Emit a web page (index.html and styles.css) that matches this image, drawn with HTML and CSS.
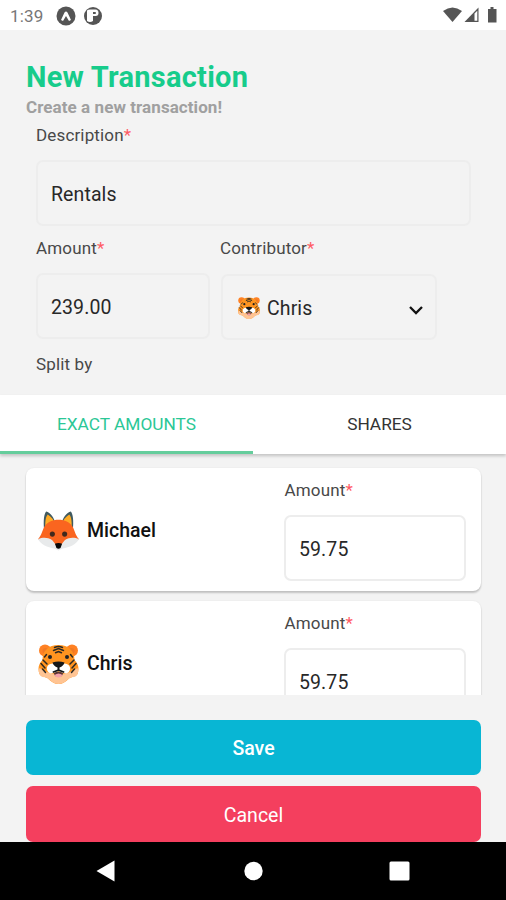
FILE: index.html
```html
<!DOCTYPE html>
<html lang="en">
<head>
<meta charset="utf-8">
<title>New Transaction</title>
<link rel="stylesheet" href="styles.css">
</head>
<body>
<svg class="defs" aria-hidden="true">
  <symbol id="tiger" viewBox="0 0 40 40">
    <circle cx="6.500" cy="6.500" r="6" fill="#ff8124"/><circle cx="33.500" cy="6.500" r="6" fill="#ff8124"/>
    <circle cx="7" cy="7" r="3" fill="#f07a25"/><circle cx="33" cy="7" r="3" fill="#f07a25"/>
    <path d="M20 1C10 1 4 7 4 16C0 20-1 25 1 30C3 33 7 33 9 34C13 38 16 40 20 40S27 38 31 34C33 33 37 33 39 30C41 25 40 20 36 16C36 7 30 1 20 1Z" fill="#ff9420"/>
    <path d="M1 24C-1 29 2 34 7 33C11 35 14 40 20 40S29 35 33 33C38 34 41 29 39 24L32 28L20 31L8 28Z" fill="#ffc493"/>
    <path d="M18 20C10 18 7 23 9 27C11 31 17 29 20 27C23 29 29 31 31 27C33 23 30 18 22 20Z" fill="#fff"/>
    <path d="M15.500 29Q20 26.500 24.500 29Q24 33 20 33T15.500 29Z" fill="#5b3333"/><path d="M16 31Q20 28 24 31Q23 33.500 20 33.500T16 31Z" fill="#f5a0a8"/>
    <path d="M14 18.500Q20 16.500 26 18.500Q25 22 21 23.500V25.500L26 27.500L25.500 29L20 27L14.500 29L14 27.500L19 25.500V23.500Q15 22 14 18.500Z" fill="#151719"/>
    <circle cx="11.500" cy="13" r="2" fill="#202225"/><circle cx="28.500" cy="13" r="2" fill="#202225"/>
    <g fill="none" stroke="#2b2925" stroke-width="1.500" stroke-linecap="round"><path d="M16 3.500Q20 1.500 24 3.500M15 6.500L20 4.500L25 6.500M17 8.800L20 7.500L23 8.800M6 13L8 10.500M34 13L32 10.500M4.500 16L8.500 20M35.500 16L31.500 20M2.500 19.500L6.500 24M37.500 19.500L33.500 24M4 25L7 28.500M36 25L33 28.500"/></g>
  </symbol>
  <symbol id="fox" viewBox="0 0 40 38">
    <path d="M6 18C5 9 6 2 8 0C12 1 16 6 17 12L23 12C24 6 28 1 32 0C34 2 35 9 34 18Z" fill="#405a60"/>
    <path d="M7.500 18C6.500 11 7.500 5 9.500 3C13 5 16 9 17 13ZM32.500 18C33.500 11 32.500 5 30.500 3C27 5 24 9 23 13Z" fill="#ffab24"/>
    <path d="M20 8C14 8 9 10 6 15C4 19 4 22 0 27L13 34L20 37L27 34L40 27C36 22 36 19 34 15C31 10 26 8 20 8Z" fill="#fa651f"/>
    <path d="M0 27C5 25 9 25 14 28L20 32L26 28C31 25 35 25 40 27C37 32 31 35 24 36L20 38L16 36C9 35 3 32 0 27Z" fill="#e8eaeb"/>
    <path d="M14 28L20 26L26 28L23 32H17Z" fill="#fa651f"/>
    <path d="M16.500 31.500Q20 30 23.500 31.500L22 35.500Q20 37 18 35.500Z" fill="#080808"/>
    <circle cx="14" cy="22" r="2.500" fill="#42291d"/><circle cx="26" cy="22" r="2.500" fill="#42291d"/>
  </symbol>
</svg>
<div class="screen">
  <header class="status">
    <span class="clock">1:39</span>
    <svg class="app-icon" viewBox="0 0 20 20"><circle cx="10" cy="10" r="9.500" fill="#555"/><path d="M5 14L8.500 6.500Q10 4.500 11.500 6.500L15 14L13 15L10 10L7 15Z" fill="#fff"/></svg>
    <svg class="app-icon second" viewBox="0 0 20 20"><circle cx="10" cy="10" r="9" fill="#555"/><path d="M4 4.500Q5 3.500 7 3.500H12.500Q15.500 3.500 15.500 7T12 10H10V15Q7 17 4 15Z" fill="#fff"/><path d="M10 6H12Q13 6 13 7T12 8H10Z" fill="#555"/></svg>
    <svg class="system" viewBox="0 0 56 18"><path d="M0 4Q9.500-3 19 4L9.500 15Z" fill="#555"/><path d="M21.500 15L35.500 0.500V15Z" fill="#555"/><path d="M31.500 6.500L34.300 3.700V13.700H31.500Z" fill="#fff"/><path d="M45 2H47.500V0H50.500V2H53.500V15.500H45Z" fill="#555"/></svg>
  </header>
  <main>
    <section class="form">
      <h1>New Transaction</h1>
      <p class="subtitle">Create a new transaction!</p>
      <div class="fields">
        <div class="label">Description<b>*</b></div>
        <div class="input">Rentals</div>
        <div class="pair">
          <div class="amount"><div class="label">Amount<b>*</b></div><div class="input">239.00</div></div>
          <div class="contributor"><div class="label">Contributor<b>*</b></div>
            <div class="input select"><svg class="mini"><use href="#tiger"/></svg><span>Chris</span><svg class="chevron" viewBox="0 0 16 10"><path d="M2 2L8 8L14 2" fill="none" stroke="#111" stroke-width="2.300"/></svg></div>
          </div>
        </div>
        <div class="label split">Split by</div>
      </div>
    </section>
    <nav class="tabs"><div class="tab active"><span>EXACT AMOUNTS</span></div><div class="tab"><span>SHARES</span></div></nav>
    <section class="members">
      <article class="card"><div class="person"><svg class="fox"><use href="#fox"/></svg><span>Michael</span></div><div class="share"><div class="label">Amount<b>*</b></div><div class="input">59.75</div></div></article>
      <article class="card"><div class="person"><svg class="tiger"><use href="#tiger"/></svg><span>Chris</span></div><div class="share"><div class="label">Amount<b>*</b></div><div class="input">59.75</div></div></article>
    </section>
    <div class="actions"><div class="button save">Save</div><div class="button cancel">Cancel</div></div>
  </main>
  <footer class="navigation">
    <svg viewBox="0 0 22 22"><path d="M1.500 11L19.500 0.500V21.500Z" fill="#fff"/></svg>
    <svg viewBox="0 0 22 22"><circle cx="11.500" cy="11" r="9.200" fill="#fff"/></svg>
    <svg viewBox="0 0 22 22"><rect x="0.500" y="1.500" width="20" height="19" rx="1.500" fill="#fff"/></svg>
  </footer>
</div>
</body>
</html>
```

FILE: styles.css
```css
* { box-sizing: border-box; }
body { margin: 0; font-family: Roboto, sans-serif; color: #242424; }
.defs { display: none; }
.screen { width: 506px; height: 900px; display: flex; flex-direction: column; overflow: hidden; background: #f3f3f3; }
.status { height: 30px; display: flex; align-items: center; padding: 1px 7px 0 10px; background: #fff; }
.clock { width: 46px; font-size: 17px; letter-spacing: .2px; color: #777; }
.app-icon { width: 20px; height: 20px; }
.second { margin-left: 7px; }
.system { width: 56px; height: 18px; margin: 1px 0 0 auto; }
main { height: 812px; display: flex; flex-direction: column; }
.form { height: 365px; padding: 30px 26px 0; }
h1 { margin: 0; height: 37px; line-height: 35px; font-size: 29px; font-weight: 700; letter-spacing: .25px; color: #17cc8b; }
.subtitle { margin: 0; height: 21px; line-height: 21px; font-size: 17px; font-weight: 700; letter-spacing: .07px; color: #a0a0a0; }
.fields { padding: 0 9px 0 10px; }
.label { height: 42px; line-height: 35px; font-size: 17px; letter-spacing: .15px; color: #484848; white-space: nowrap; }
.label b { font-weight: 400; color: #ff5a64; }
.input { height: 66px; display: flex; align-items: center; padding: 2px 13px 0; border: 2px solid #ededed; border-radius: 7px; font-size: 19.500px; letter-spacing: .1px; color: #282828; }
.pair { display: flex; gap: 10px; padding-top: 5px; }
.amount { width: 174px; }
.contributor { width: 217px; }
.select { margin: 1px 0 0 1px; }
.mini { width: 22px; height: 22px; margin: 0 7px 0 2px; }
.chevron { width: 16px; height: 10px; margin: 3px -2px 0 auto; }
.split { margin-top: 7px; }
.tabs { position: relative; z-index: 1; height: 59px; flex: none; display: flex; background: #fff; box-shadow: 0 2px 3px #0003; }
.tab { flex: 1; display: flex; align-items: center; justify-content: center; padding-top: 2px; border-bottom: 3px solid transparent; font-size: 17.300px; color: #333; }
.tab.active { color: #2bc796; border-color: #65cd9c; }
.members { height: 241px; flex: none; padding: 14px 25px 0 26px; overflow: hidden; }
.card { height: 123px; display: flex; justify-content: space-between; margin-bottom: 10px; padding: 5px 15px 10px 12px; border-radius: 8px; background: #fff; box-shadow: 0 2px 2px #0003, 0 0 2px #0001; }
.person { display: flex; align-items: center; gap: 8px; padding-top: 7px; font-size: 19.500px; font-weight: 500; color: #111; }
.fox, .tiger { width: 41px; height: 40px; }
.share { width: 182px; }
.share .label { padding-left: .5px; }
.actions { padding: 25px 25px 0 26px; }
.button { height: 55px; margin-bottom: 11px; display: flex; align-items: center; justify-content: center; padding-top: 2px; border-radius: 7px; font-size: 19.500px; color: #fff; }
.save { background: #08b6d4; font-weight: 500; }
.cancel { height: 56px; margin-bottom: 0; background: #f43f5e; }
.navigation { height: 58px; display: flex; align-items: center; padding: 0 95px; justify-content: space-between; background: #000; }
.navigation svg { width: 22px; height: 22px; }
```
